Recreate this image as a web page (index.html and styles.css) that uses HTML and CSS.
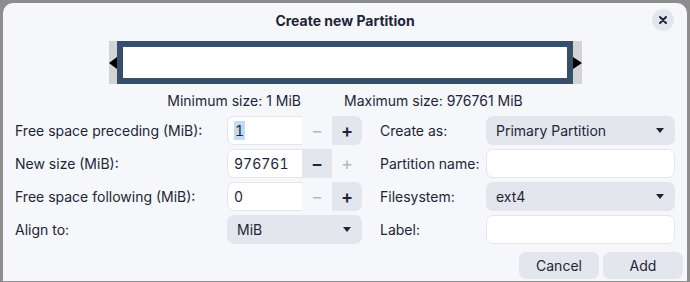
FILE: index.html
```html
<!DOCTYPE html>
<html lang="en">
<head>
    <meta charset="UTF-8">
    <title>Create new Partition</title>
    <link rel="stylesheet" href="styles.css">
</head>
<body>
    <div class="dialog">
        <div class="header">
            <span></span>
            <h1>Create new Partition</h1>
            <button class="close" type="button" aria-label="Close">
                <svg width="10" height="10" viewBox="0 0 10 10"><path d="M2 2L8 8M8 2L2 8" stroke="#1d2636" stroke-width="2" stroke-linecap="round"/></svg>
            </button>
        </div>

        <div class="bar">
            <div class="bar-fill"></div>
        </div>

        <div class="sizes">
            <span>Minimum size: 1 MiB</span>
            <span>Maximum size: 976761 MiB</span>
        </div>

        <form class="form" action="javascript:void(0);">
            <label>Free space preceding (MiB):</label>
            <div class="spin">
                <div class="spin-entry"><span class="selected">1</span></div>
                <span class="spin-btn off">&minus;</span>
                <span class="spin-btn on end">+</span>
            </div>
            <label class="right">Create as:</label>
            <div class="combo">Primary Partition<span class="arrow"></span></div>

            <label>New size (MiB):</label>
            <div class="spin">
                <div class="spin-entry">976761</div>
                <span class="spin-btn on">&minus;</span>
                <span class="spin-btn off">+</span>
            </div>
            <label class="right">Partition name:</label>
            <div class="entry"></div>

            <label>Free space following (MiB):</label>
            <div class="spin">
                <div class="spin-entry">0</div>
                <span class="spin-btn off">&minus;</span>
                <span class="spin-btn on end">+</span>
            </div>
            <label class="right">Filesystem:</label>
            <div class="combo">ext4<span class="arrow"></span></div>

            <label>Align to:</label>
            <div class="combo">MiB<span class="arrow"></span></div>
            <label class="right">Label:</label>
            <div class="entry"></div>
        </form>

        <div class="actions">
            <button type="button" class="btn">Cancel</button>
            <button type="button" class="btn">Add</button>
        </div>
    </div>
</body>
</html>
```

FILE: styles.css
```css
body {
    margin: 0;
    background-color: #8d8d8d;
    font-family: Inter, "Noto Sans", sans-serif;
    font-size: 14px;
    color: #1d2636;
}
.dialog {
    margin: 3px 3px 0;
    height: 278px;
    background-color: #f6f7fa;
    border-radius: 10px 10px 0 0;
    display: flex;
    flex-direction: column;
}
.header {
    height: 34px;
    display: grid;
    grid-template-columns: 1fr auto 1fr;
    align-items: center;
}
.header h1 {
    margin: 0;
    font-size: 14px;
    font-weight: 700;
}
.close {
    justify-self: end;
    margin-right: 13px;
    width: 22px;
    height: 22px;
    border: none;
    border-radius: 50%;
    background-color: #e3e6ec;
    display: flex;
    align-items: center;
    justify-content: center;
    padding: 0;
}
.bar {
    position: relative;
    align-self: center;
    margin-top: 4px;
    width: 473px;
    height: 43px;
    box-sizing: border-box;
    padding: 0 9px 0 8px;
    background-color: #d3d3d3;
    display: flex;
}
.bar-fill {
    flex: 1;
    border: 6px solid #36506c;
    background-color: #fff;
}
.bar::before,
.bar::after {
    content: "";
    position: absolute;
    top: 16px;
    border-top: 6px solid transparent;
    border-bottom: 6px solid transparent;
}
.bar::before {
    left: 0;
    border-right: 8px solid #000;
}
.bar::after {
    right: 0;
    border-left: 9px solid #000;
}
.sizes {
    margin-top: 8px;
    display: flex;
    justify-content: center;
    gap: 43px;
    line-height: 17px;
}
.form {
    margin: 7px 12px 0;
    display: grid;
    grid-template-columns: 212px 135px 124px 189px;
    row-gap: 4px;
    grid-auto-rows: 29px;
    align-items: center;
}
.form .right {
    padding-left: 18px;
    white-space: nowrap;
}
.spin {
    display: flex;
    height: 29px;
}
.spin-entry {
    width: 75px;
    box-sizing: border-box;
    background-color: #fff;
    border: 1px solid #e3e6eb;
    border-right: none;
    border-radius: 7px 0 0 7px;
    padding-left: 6px;
    display: flex;
    align-items: center;
    font-variant-numeric: tabular-nums;
}
.selected {
    background-color: #c2daf2;
    padding: 1px 1px;
}
.spin-btn {
    width: 30px;
    display: flex;
    align-items: center;
    justify-content: center;
    font-size: 18px;
    font-weight: 600;
}
.spin-btn.on {
    background-color: #e3e6ec;
}
.spin-btn.off {
    color: #b3b7bf;
    font-weight: 400;
}
.spin-btn.end {
    border-radius: 0 7px 7px 0;
}
.combo,
.entry {
    height: 29px;
    box-sizing: border-box;
    border-radius: 7px;
    display: flex;
    align-items: center;
    padding: 0 10px;
}
.combo {
    background-color: #e3e6ec;
    justify-content: space-between;
}
.entry {
    background-color: #fff;
    border: 1px solid #e3e6eb;
}
.arrow {
    border-left: 4px solid transparent;
    border-right: 4px solid transparent;
    border-top: 5px solid #1d2636;
    margin-right: 1px;
}
.actions {
    margin-top: auto;
    margin-bottom: 2px;
    display: flex;
    justify-content: flex-end;
    gap: 4px;
    padding-right: 4px;
}
.btn {
    width: 80px;
    height: 27px;
    border: none;
    border-radius: 7px;
    background-color: #e3e6ec;
    font-family: Inter, "Noto Sans", sans-serif;
    font-size: 14px;
    color: #1d2636;
}
```
